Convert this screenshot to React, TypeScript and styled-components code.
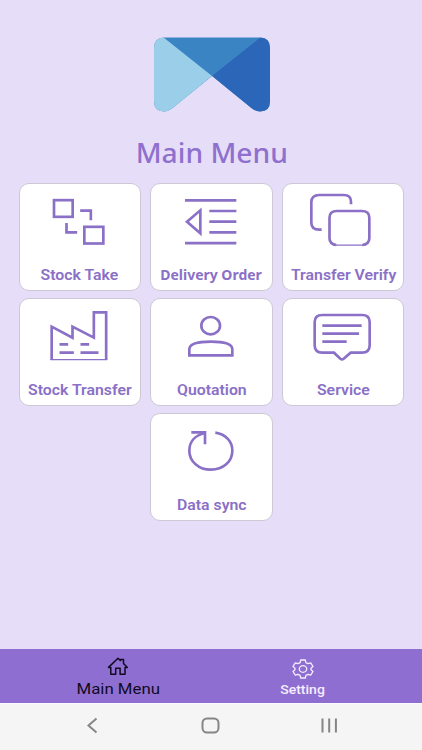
import React from "react";
import styled, { createGlobalStyle } from "styled-components";

const GlobalStyle = createGlobalStyle`
  * { box-sizing: border-box; }
  html, body { margin: 0; padding: 0; }
  body { background: #e6def8; overflow: hidden; }
`;

const Screen = styled.div`
  width: 422px;
  height: 750px;
  display: flex;
  flex-direction: column;
  background: #e6def8;
  font-family: Roboto, "Liberation Sans", sans-serif;
`;

const Content = styled.main`
  flex: 1;
  display: flex;
  flex-direction: column;
  align-items: center;
  padding-top: 37px;
`;

const Logo = styled.svg`
  display: block;
  width: 118px;
  height: 75px;
  margin-left: 2px;
`;

const Title = styled.h1<{ $stretch: number }>`
  margin: 23px 0 0 1px;
  height: 36px;
  font: 500 27px/36px "Noto Sans", "Open Sans", sans-serif;
  color: #8f70ce;
  white-space: nowrap;
  transform: scaleX(${(p) => p.$stretch});
`;

const Grid = styled.div`
  margin: 11.5px 0 0 1px;
  width: 387px;
  display: flex;
  flex-wrap: wrap;
  justify-content: center;
  gap: 6.5px 9.2px;
`;

const Card = styled.button`
  width: 122.5px;
  height: 108.5px;
  padding: 6.5px 0 0;
  border: 1px solid #cdc8d4;
  border-radius: 10px;
  background: #fff;
  display: flex;
  flex-direction: column;
  align-items: center;
  font-family: inherit;
`;

const Glyph = styled.svg`
  display: block;
  width: 70px;
  height: 60px;
  flex: none;
  fill: none;
  stroke: #8a70c6;
  stroke-width: 8;
`;

const CardLabel = styled.span<{ $stretch: number; $humanist?: boolean }>`
  margin-top: 14.5px;
  line-height: 20px;
  font-size: ${(p) => (p.$humanist ? 13.5 : 14)}px;
  font-weight: ${(p) => (p.$humanist ? 700 : 600)};
  font-family: ${(p) => (p.$humanist ? '"Noto Sans"' : "Roboto")}, sans-serif;
  color: #8a70c6;
  white-space: nowrap;
  transform: scaleX(${(p) => p.$stretch});
`;

const TabBar = styled.nav`
  height: 54.5px;
  flex: none;
  display: flex;
  padding: 0 26.5px 0 25.5px;
  background: #8e6fd1;
`;

const Tab = styled.div<{ $active?: boolean }>`
  flex: 1;
  display: flex;
  flex-direction: column;
  align-items: center;
  padding-top: ${(p) => (p.$active ? 7 : 9)}px;
  color: ${(p) => (p.$active ? "#120a22" : "#f6edff")};
`;

const TabIcon = styled.svg`
  display: block;
  width: 24px;
  height: 22px;
  fill: none;
  stroke: currentColor;
`;

const TabLabel = styled.span<{ $active?: boolean }>`
  margin-top: ${(p) => (p.$active ? 1 : -1)}px;
  line-height: 20px;
  font-size: ${(p) => (p.$active ? 15 : 13.5)}px;
  font-weight: ${(p) => (p.$active ? 400 : 500)};
  white-space: nowrap;
  transform: scaleX(${(p) => (p.$active ? 1.12 : 1.04)});
`;

const SystemBar = styled.div`
  height: 47px;
  flex: none;
  display: flex;
  justify-content: space-between;
  padding: 10px 81px 0 80px;
  background: #f5f5f5;
  border-top: 1px solid #fcfaff;
`;

const SystemIcon = styled.svg`
  display: block;
  width: 24px;
  height: 24px;
  fill: none;
  stroke: #868686;
  stroke-width: 2;
`;

type Item = {
  label: string;
  stretch: number;
  humanist?: boolean;
  viewBox: string;
  art: React.ReactNode;
};

const items: Item[] = [
  {
    label: "Stock Take",
    stretch: 1.13,
    viewBox: "103.5 45 210 180",
    art: (
      <>
        <rect x="130.5" y="75.5" width="56" height="50" />
        <rect x="221.5" y="155.5" width="57" height="50" />
        <path d="M209 107H241V136M168 144V172H200" />
      </>
    ),
  },
  {
    label: "Delivery Order",
    stretch: 1.035,
    humanist: true,
    viewBox: "93 45 210 180",
    art: (
      <>
        <path d="M117 76H271M190 108H271M190 140H271M190 172H271M117 204.500H271" />
        <path d="M163 106V175L123 140Z" />
      </>
    ),
  },
  {
    label: "Transfer Verify",
    stretch: 1.13,
    viewBox: "93 45 210 180",
    art: (
      <>
        <path d="M222 88V80Q222 60 200 60H127Q103 60 103 82V143Q103 164 127 164H134" />
        <path d="M178 210Q157.500 208 157.500 190V128Q157.500 108 180 108H254Q277 108 277 128V190Q277 208 256 210" />
        <path d="M168 210.500H267" strokeWidth="4" />
      </>
    ),
  },
  {
    label: "Stock Transfer",
    stretch: 1.13,
    viewBox: "103.5 39 210 180",
    art: (
      <>
        <path d="M123.500 204V104L186 137V104L250 137V61H287V204" />
        <path d="M120 203H290" strokeWidth="3.500" />
        <path d="M147 157H173M210 157H236M147 182H190M210 182H264" />
      </>
    ),
  },
  {
    label: "Quotation",
    stretch: 1.13,
    viewBox: "93 39 210 180",
    art: (
      <>
        <ellipse cx="194" cy="101" rx="28" ry="26" />
        <path d="M130 190V172C130 156 158 149 194.500 149S259 156 259 172V190Z" />
      </>
    ),
  },
  {
    label: "Service",
    stretch: 1.13,
    viewBox: "93 39 210 180",
    art: (
      <>
        <path d="M136 69H255Q278 69 278 90V160Q278 182 255 182H221L200 200Q195 204 190 200L171 182H136Q113 182 113 160V90Q113 69 136 69Z" />
        <path d="M136 101H254M136 125H246M136 149H209" />
      </>
    ),
  },
  {
    label: "Data sync",
    stretch: 1.13,
    viewBox: "93 36 210 180",
    art: (
      <>
        <path d="M208 74C240 79 259 101 259 128C259 161 231 185 195 185C158 185 130 160 130 128C130 103 145 82 177 75" />
        <path d="M136 73H177V109" />
      </>
    ),
  },
];

export default function App() {
  return (
    <>
      <GlobalStyle />
      <Screen>
        <Content>
          <Logo viewBox="0 0 118 75">
            <defs>
              <clipPath id="logoShape">
                <path d="M11 .5H107Q117 .5 117 11V64Q117 74.500 107 74.500Q103 74.500 99 71.500L59 39L19 71.500Q15 74.500 11 74.500Q1 74.500 1 64V11Q1 .5 11 .5Z" />
              </clipPath>
            </defs>
            <g clipPath="url(#logoShape)">
              <path d="M0 0H118V75H0Z" fill="#3b84c4" />
              <path d="M0 0H10L59 39L16 75H0Z" fill="#9bcfe9" />
              <path d="M118 0H108L59 39L102 75H118Z" fill="#2b66b8" />
            </g>
          </Logo>
          <Title $stretch={1.045}>Main Menu</Title>
          <Grid>
            {items.map((item) => (
              <Card key={item.label}>
                <Glyph viewBox={item.viewBox}>{item.art}</Glyph>
                <CardLabel $stretch={item.stretch} $humanist={item.humanist}>
                  {item.label}
                </CardLabel>
              </Card>
            ))}
          </Grid>
        </Content>
        <TabBar>
          <Tab $active>
            <TabIcon viewBox="0 0 24 22" strokeWidth="1.5">
              <path d="M12 2.300L2.500 11.400H4.800V18.300H9.700V12.300H14.100V18.300H19V11.400H21.400L17.500 7.400V3.600H14.500V4.600Z" strokeLinejoin="round" />
            </TabIcon>
            <TabLabel $active>Main Menu</TabLabel>
          </Tab>
          <Tab>
            <TabIcon viewBox="0 0 24 22" strokeWidth="1.3">
              <path d="M9.700 2H14.300L14.900 4.600L17 5.700L19.700 4.900L22 8.500L20 10.200V11.800L22 13.500L19.700 17.100L17 16.300L14.900 17.400L14.300 20H9.700L9.100 17.400L7 16.300L4.300 17.100L2 13.500L4 11.800V10.200L2 8.500L4.300 4.900L7 5.700L9.100 4.600Z" strokeLinejoin="round" />
              <ellipse cx="12" cy="11" rx="3.700" ry="3.300" />
            </TabIcon>
            <TabLabel>Setting</TabLabel>
          </Tab>
        </TabBar>
        <SystemBar>
          <SystemIcon viewBox="0 0 24 24">
            <path d="M16.500 4.500L8.500 11.500L16.500 18.500" />
          </SystemIcon>
          <SystemIcon viewBox="0 0 24 24">
            <rect x="3.500" y="4.500" width="16" height="14" rx="4.500" />
          </SystemIcon>
          <SystemIcon viewBox="0 0 24 24">
            <path d="M5.500 4.500V18.500M12.200 4.500V18.500M18.900 4.500V18.500" />
          </SystemIcon>
        </SystemBar>
      </Screen>
    </>
  );
}
